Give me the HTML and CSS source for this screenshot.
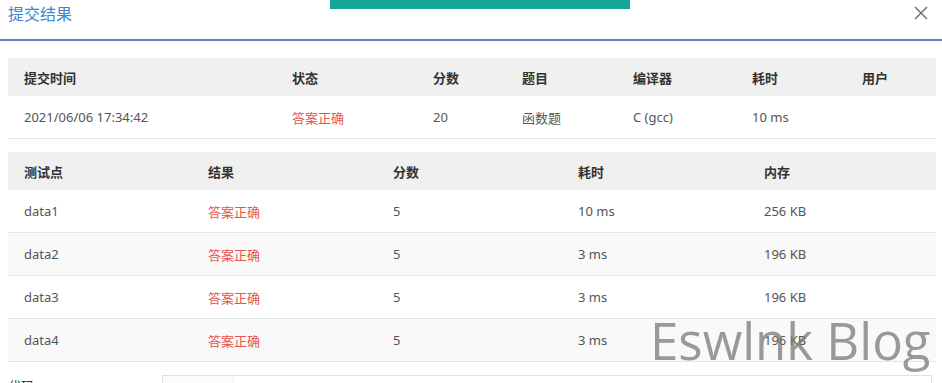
FILE: index.html
```html
<!DOCTYPE html>
<html lang="zh-CN">
<head>
    <meta charset="UTF-8">
    <meta name="viewport" content="width=device-width, initial-scale=1.0">
    <title>提交结果</title>
    <link rel="stylesheet" href="styles.css">
</head>
<body>
    <div class="toast-bar"></div>

    <div class="dialog">
        <div class="dialog-header">
            <h2 class="dialog-title">提交结果</h2>
            <button class="close-btn" aria-label="关闭">
                <svg width="14" height="14" viewBox="0 0 14 14">
                    <path d="M1 1 L13 13 M13 1 L1 13" stroke="#777" stroke-width="1.6" fill="none"/>
                </svg>
            </button>
        </div>

        <div class="dialog-body">
            <table class="result-table summary">
                <colgroup>
                    <col style="width: 268px">
                    <col style="width: 141px">
                    <col style="width: 89px">
                    <col style="width: 111px">
                    <col style="width: 119px">
                    <col style="width: 110px">
                    <col>
                </colgroup>
                <thead>
                    <tr>
                        <th>提交时间</th>
                        <th>状态</th>
                        <th>分数</th>
                        <th>题目</th>
                        <th>编译器</th>
                        <th>耗时</th>
                        <th>用户</th>
                    </tr>
                </thead>
                <tbody>
                    <tr>
                        <td>2021/06/06 17:34:42</td>
                        <td class="ok">答案正确</td>
                        <td>20</td>
                        <td>函数题</td>
                        <td>C (gcc)</td>
                        <td>10 ms</td>
                        <td></td>
                    </tr>
                </tbody>
            </table>

            <table class="result-table cases">
                <colgroup>
                    <col style="width: 184px">
                    <col style="width: 185px">
                    <col style="width: 185px">
                    <col style="width: 186px">
                    <col>
                </colgroup>
                <thead>
                    <tr>
                        <th>测试点</th>
                        <th>结果</th>
                        <th>分数</th>
                        <th>耗时</th>
                        <th>内存</th>
                    </tr>
                </thead>
                <tbody>
                    <tr>
                        <td>data1</td>
                        <td class="ok">答案正确</td>
                        <td>5</td>
                        <td>10 ms</td>
                        <td>256 KB</td>
                    </tr>
                    <tr>
                        <td>data2</td>
                        <td class="ok">答案正确</td>
                        <td>5</td>
                        <td>3 ms</td>
                        <td>196 KB</td>
                    </tr>
                    <tr>
                        <td>data3</td>
                        <td class="ok">答案正确</td>
                        <td>5</td>
                        <td>3 ms</td>
                        <td>196 KB</td>
                    </tr>
                    <tr>
                        <td>data4</td>
                        <td class="ok">答案正确</td>
                        <td>5</td>
                        <td>3 ms</td>
                        <td>196 KB</td>
                    </tr>
                </tbody>
            </table>

            <div class="code-row">
                <label class="code-label">代码</label>
                <div class="code-box"><div class="gutter"></div></div>
            </div>
        </div>
    </div>

    <div class="watermark">Eswlnk Blog</div>
</body>
</html>
```

FILE: styles.css
```css
body {
    margin: 0;
    font-family: "Noto Sans", "Noto Sans CJK SC", sans-serif;
    font-size: 13px;
    color: #555;
    background: #fff;
    overflow: hidden;
}

.toast-bar {
    position: absolute;
    top: 0;
    left: 330px;
    width: 300px;
    height: 9px;
    background-color: #17a697;
}

.dialog-header {
    display: flex;
    justify-content: space-between;
    align-items: flex-start;
    height: 41px;
    box-sizing: border-box;
    padding: 2px 14px 0 8px;
    border-bottom: 2px solid #6282c4;
}

.dialog-title {
    margin: 0;
    font-size: 16px;
    font-weight: normal;
    line-height: 24px;
    color: #3a86d6;
}

.close-btn {
    border: none;
    background: none;
    padding: 0;
    margin-top: 4px;
    cursor: pointer;
}

.dialog-body {
    padding: 17px 6px 0 8px;
}

.result-table {
    width: 100%;
    border-collapse: collapse;
    table-layout: fixed;
}

.result-table th,
.result-table td {
    text-align: left;
    padding: 0 0 0 16px;
    white-space: nowrap;
}

.result-table th {
    height: 38px;
    background-color: #f0f0f0;
    color: #333;
    font-weight: bold;
}

.result-table td {
    height: 42px;
    border-bottom: 1px solid #e6e6e6;
}

.summary {
    margin-bottom: 13px;
}

.cases tbody tr:nth-child(even) td {
    background-color: #f9f9f9;
}

.ok {
    color: #e8534b;
}

.code-row {
    display: flex;
    margin-top: 13px;
}

.code-label {
    width: 154px;
    padding-top: 1px;
    color: #333;
}

.code-box {
    flex: 1;
    height: 120px;
    border: 1px solid #e0e0e0;
    margin-right: 4px;
    display: flex;
}

.gutter {
    width: 70px;
    border-right: 1px solid #f2f2f2;
    background: #fcfcfc;
}

.watermark {
    position: absolute;
    left: 650px;
    top: 305px;
    font-family: "Open Sans", sans-serif;
    font-size: 51px;
    line-height: 70px;
    color: rgba(120, 120, 120, 0.75);
    white-space: nowrap;
    pointer-events: none;
}
```
